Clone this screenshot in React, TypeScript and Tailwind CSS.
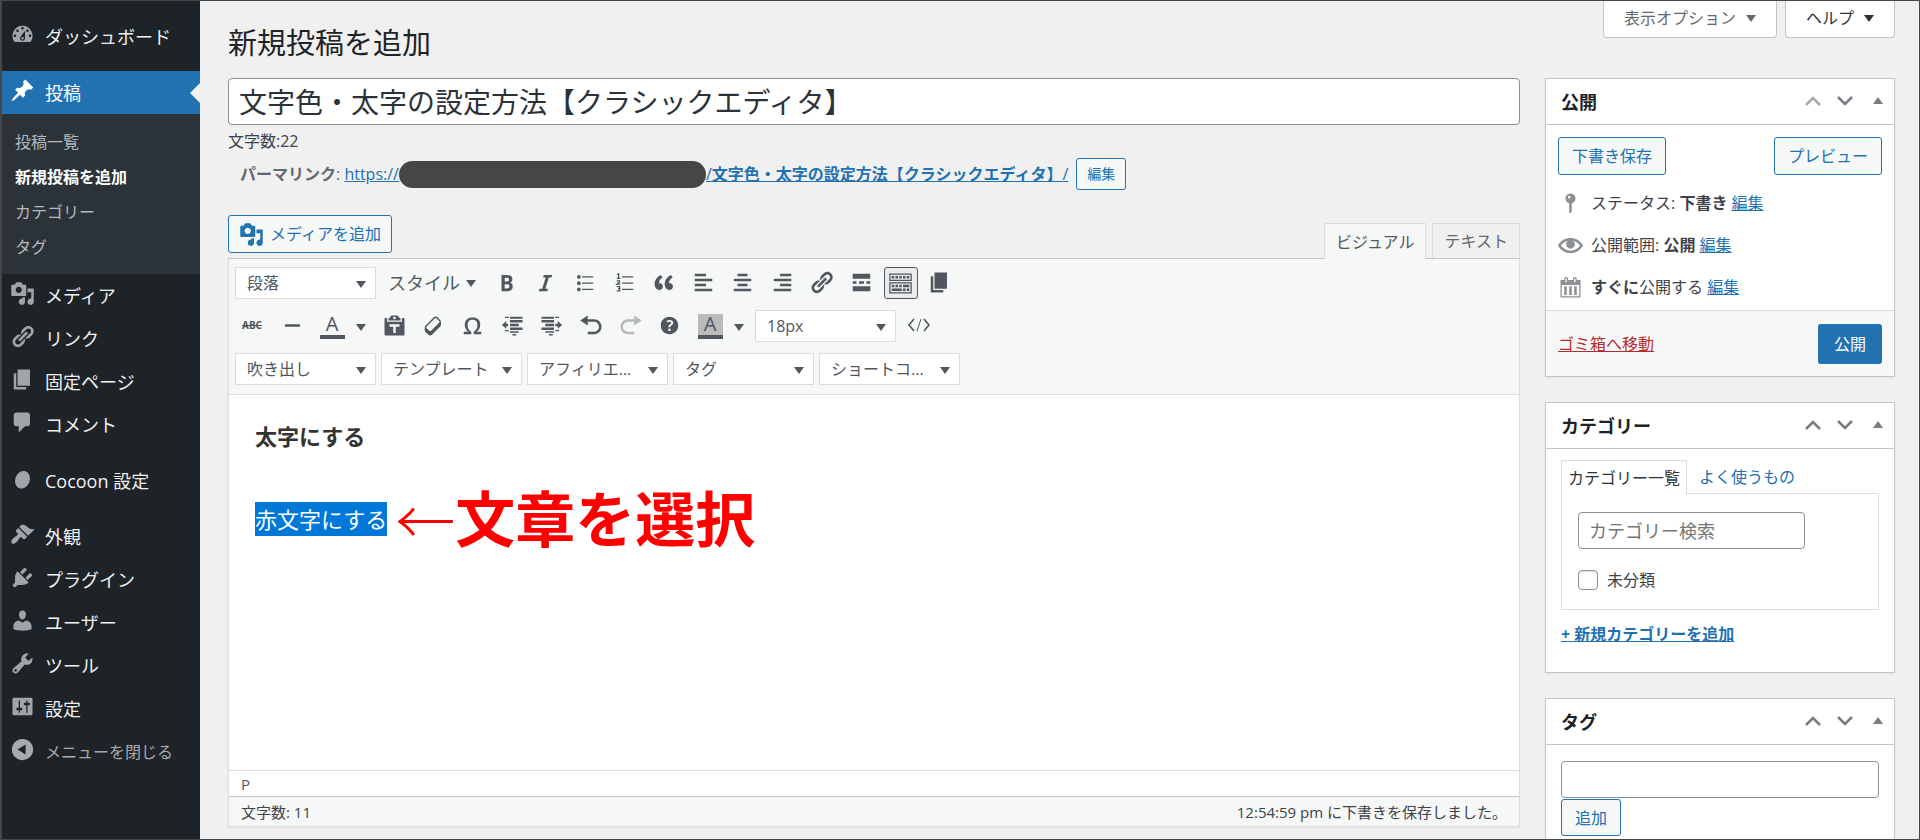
import { useState } from "react";
import type { ReactNode } from "react";

// 20x20 admin icon set
const ICONS = {
  post: "M10.44 3.02l1.82-1.82 6.36 6.35-1.83 1.82c-1.05-.68-2.48-.57-3.41.36l-.75.75c-.92.93-1.04 2.35-.35 3.41l-1.83 1.82-2.41-2.41-2.8 2.79c-.42.42-3.38 2.71-3.8 2.29s1.86-3.39 2.28-3.81l2.79-2.79L4.1 9.36l1.83-1.82c1.05.69 2.48.57 3.4-.36l.75-.75c.93-.92 1.05-2.35.36-3.41z",
  media: "M13 11V4c0-.55-.45-1-1-1h-1.67L9 1H5L3.67 3H2c-.55 0-1 .45-1 1v7c0 .55.45 1 1 1h10c.55 0 1-.45 1-1zM7 4.5c1.38 0 2.5 1.12 2.5 2.5S8.38 9.5 7 9.5 4.5 8.38 4.5 7 5.62 4.5 7 4.5zM14 6h5v10.5c0 1.38-1.12 2.5-2.5 2.5S14 17.88 14 16.5s1.12-2.5 2.5-2.5c.17 0 .34.02.5.05V9h-3V6zm-4 8.05V13h2v3.5c0 1.38-1.12 2.5-2.5 2.5S7 17.88 7 16.5 8.12 14 9.5 14c.17 0 .34.02.5.05z",
  link: "M17.74 2.76c1.68 1.69 1.68 4.41 0 6.1l-1.53 1.52c-1.12 1.12-2.7 1.47-4.14 1.09l2.62-2.61.76-.77.76-.76c.84-.84.84-2.2 0-3.04-.84-.85-2.2-.85-3.04 0l-.77.76-3.38 3.38c-.37-1.44-.02-3.02 1.1-4.14l1.52-1.53c1.69-1.68 4.42-1.68 6.1 0zM8.59 13.43l5.34-5.34c.42-.42.42-1.1 0-1.52-.44-.43-1.13-.39-1.53 0l-5.33 5.34c-.42.42-.42 1.1 0 1.52.44.43 1.13.39 1.52 0zm-.76 2.29l4.14-4.15c.38 1.44.03 3.02-1.09 4.14l-1.52 1.53c-1.69 1.68-4.41 1.68-6.1 0-1.68-1.68-1.68-4.42 0-6.1l1.53-1.52c1.12-1.12 2.7-1.47 4.14-1.1l-4.14 4.15c-.85.84-.85 2.2 0 3.05.84.84 2.2.84 3.04 0z",
  page: "M6 15V2h10v13H6zm-1 1h8v2H3V5h2v11z",
  comment: "M5 2h9c1.1 0 2 .9 2 2v7c0 1.1-.9 2-2 2h-2l-5 5v-5H5c-1.1 0-2-.9-2-2V4c0-1.1.9-2 2-2z",
  appearance: "M14.48 11.06L7.41 3.99l1.5-1.5c.5-.56 2.3-.47 3.51.32 1.21.8 1.43 1.28 2.91 2.1 1.18.64 2.45 1.26 4.45.85zm-.71.71L6.7 4.7 4.93 6.47c-.39.39-.39 1.02 0 1.41l1.06 1.06c.39.39.39 1.03 0 1.42-.6.6-1.43 1.11-2.21 1.69-.35.26-.7.53-1.01.84C1.43 14.23.4 16.08 1.4 17.07c.99 1 2.84-.03 4.18-1.36.31-.31.58-.66.85-1.02.57-.78 1.08-1.61 1.69-2.21.39-.39 1.02-.39 1.41 0l1.06 1.06c.39.39 1.02.39 1.41 0z",
  plugin: "M13.11 4.36L9.87 7.6 8 5.73l3.24-3.24c.35-.34 1.05-.2 1.56.32.52.51.66 1.21.31 1.55zm-8 1.77l.91-1.12 9.01 9.01-1.19.84c-.71.71-2.63 1.16-3.82 1.16H6.14L4.9 17.26c-.59.59-1.54.59-2.12 0-.59-.58-.59-1.53 0-2.12l1.24-1.24v-3.88c0-1.13.4-3.19 1.09-3.89zm7.26 3.97l3.24-3.24c.34-.35 1.04-.21 1.55.31.52.51.66 1.21.31 1.55l-3.24 3.25z",
  user: "M10 9.25c-2.27 0-2.73-3.44-2.73-3.44C7 4.02 7.82 2 9.97 2c2.16 0 2.98 2.02 2.71 3.81 0 0-.41 3.44-2.68 3.44zm0 2.57L12.72 10c2.39 0 4.52 2.33 4.52 4.53v2.49s-3.65 1.13-7.24 1.13c-3.65 0-7.24-1.13-7.24-1.13v-2.49c0-2.25 1.94-4.48 4.47-4.48z",
  tool: "M16.68 9.77c-1.34 1.34-3.3 1.67-4.95.99l-5.41 6.52c-.99.99-2.59.99-3.58 0s-.99-2.59 0-3.57l6.52-5.42c-.68-1.65-.35-3.61.99-4.95 1.28-1.28 3.12-1.62 4.72-1.06l-2.89 2.89 2.82 2.82 2.86-2.87c.53 1.58.18 3.39-1.08 4.65zM3.81 16.21c.4.39 1.04.39 1.43 0 .4-.4.4-1.04 0-1.43-.39-.4-1.03-.4-1.43 0-.39.39-.39 1.03 0 1.43z",
  settings: "M18 16V4c0-.55-.45-1-1-1H3c-.55 0-1 .45-1 1v12c0 .55.45 1 1 1h14c.55 0 1-.45 1-1zM8 11h1c.55 0 1 .45 1 1s-.45 1-1 1H8v1.5c0 .28-.22.5-.5.5s-.5-.22-.5-.5V13H6c-.55 0-1-.45-1-1s.45-1 1-1h1V5.5c0-.28.22-.5.5-.5s.5.22.5.5V11zm5-2h-1c-.55 0-1-.45-1-1s.45-1 1-1h1V5.5c0-.28.22-.5.5-.5s.5.22.5.5V7h1c.55 0 1 .45 1 1s-.45 1-1 1h-1v5.5c0 .28-.22.5-.5.5s-.5-.22-.5-.5V9z",
  collapse: "M10 1.5a8.5 8.5 0 1 0 0 17 8.5 8.5 0 0 0 0-17zM12.5 6v8L6 10z",
  dashboard: "M3.76 16h12.48A7.998 7.998 0 0 0 10 3a7.998 7.998 0 0 0-6.24 13zM10 4c.55 0 1 .45 1 1s-.45 1-1 1-1-.45-1-1 .45-1 1-1zM6 6c.55 0 1 .45 1 1s-.45 1-1 1-1-.45-1-1 .45-1 1-1zm8 0c.55 0 1 .45 1 1s-.45 1-1 1-1-.45-1-1 .45-1 1-1zm-5.37 5.55L12 7v6c0 1.1-.9 2-2 2s-2-.9-2-2c0-.57.24-1.08.63-1.45zM4 10c.55 0 1 .45 1 1s-.45 1-1 1-1-.45-1-1 .45-1 1-1zm12 0c.55 0 1 .45 1 1s-.45 1-1 1-1-.45-1-1 .45-1 1-1zm-5 3c0-.55-.45-1-1-1s-1 .45-1 1 .45 1 1 1 1-.45 1-1z",
  bold: "M6 4v13h4.54c1.37 0 2.46-.33 3.26-1 .8-.66 1.2-1.58 1.2-2.77 0-.84-.17-1.51-.51-2.01s-.9-.85-1.67-1.03v-.09c.57-.1 1.02-.4 1.36-.9s.51-1.13.51-1.91c0-1.14-.39-1.98-1.17-2.5C12.75 4.26 11.5 4 9.78 4H6zm2.57 5.15V6.26h1.36c.73 0 1.27.11 1.61.32.34.22.51.58.51 1.07 0 .54-.16.92-.47 1.15s-.82.35-1.51.35h-1.5zm0 2.19h1.6c1.44 0 2.16.53 2.16 1.61 0 .6-.17 1.05-.51 1.34s-.86.43-1.57.43H8.57v-3.38z",
  italic: "M14.78 6h-2.13l-2.8 9h2.12l-.62 2H4.6l.62-2h2.14l2.8-9H8.03l.62-2h6.75z",
  ul: "M5.5 7a1.5 1.5 0 1 1 0-3 1.5 1.5 0 0 1 0 3zM8 5h9v1H8zM5.5 12a1.5 1.5 0 1 1 0-3 1.5 1.5 0 0 1 0 3zM8 10h9v1H8zM5.5 17a1.5 1.5 0 1 1 0-3 1.5 1.5 0 0 1 0 3zM8 15h9v1H8z",
  quote: "M9.49 13.22c0-.74-.2-1.38-.61-1.9-.62-.78-1.83-.88-2.53-.72-.29-1.65 1.11-3.75 2.92-4.65L7.88 4c-2.73 1.3-5.42 4.28-4.96 8.05C3.21 14.43 4.59 16 6.54 16c.85 0 1.56-.25 2.12-.75s.83-1.18.83-2.03zm8.05 0c0-.74-.2-1.38-.61-1.9-.63-.78-1.83-.88-2.53-.72-.29-1.65 1.11-3.75 2.92-4.65L15.93 4c-2.73 1.3-5.41 4.28-4.95 8.05.29 2.38 1.66 3.95 3.61 3.95.85 0 1.56-.25 2.12-.75s.83-1.18.83-2.03z",
  alignLeft: "M12 5V3H3v2h9zm5 4V7H3v2h14zm-5 4v-2H3v2h9zm5 4v-2H3v2h14z",
  alignCenter: "M14 5V3H6v2h8zm3 4V7H3v2h14zm-3 4v-2H6v2h8zm3 4v-2H3v2h14z",
  alignRight: "M17 5V3H8v2h9zm0 4V7H3v2h14zm0 4v-2H8v2h9zm0 4v-2H3v2h14z",
  more: "M17 7V3H3v4h14zM6 11V9H3v2h3zm6 0V9H8v2h4zm5 0V9h-3v2h3zm0 6v-4H3v4h14z",
  kitchenSink: "M19 2v6H1V2h18zm-1 5V3H2v4h16zM5 4v2H3V4h2zm3 0v2H6V4h2zm3 0v2H9V4h2zm3 0v2h-2V4h2zm3 0v2h-2V4h2zm2 5v9H1V9h18zm-1 8v-7H2v7h16zM5 11v2H3v-2h2zm3 0v2H6v-2h2zm3 0v2H9v-2h2zm6 0v2h-5v-2h5zm-6 3v2H3v-2h8zm3 0v2h-2v-2h2zm3 0v2h-2v-2h2z",
  hr: "M4 9h12v2H4z",
  paste: "M12.38 2L15 5v1H5V5l2.64-3h4.74zM10 5c.55 0 1-.44 1-1 0-.55-.45-1-1-1s-1 .45-1 1c0 .56.45 1 1 1zm5.45-1H17c.55 0 1 .45 1 1v12c0 .56-.45 1-1 1H3c-.55 0-1-.44-1-1V5c0-.55.45-1 1-1h1.55L4 4.63V7h12V4.63zM14 11V9H6v2h3v5h2v-5h3z",
  eraser: "M14.29 4.59l1.1 1.11c.41.4.61.94.61 1.47v2.12c0 .53-.2 1.07-.61 1.47l-6.63 6.63c-.4.41-.94.61-1.47.61s-1.07-.2-1.47-.61l-1.11-1.1-1.1-1.11c-.41-.4-.61-.94-.61-1.47v-2.12c0-.54.2-1.07.61-1.48l6.63-6.62c.4-.41.94-.61 1.47-.61s1.06.2 1.47.61zm-6.21 9.7l6.42-6.42c.39-.39.39-1.03 0-1.43L12.36 4.3c-.19-.19-.45-.29-.72-.29s-.52.1-.71.29l-6.42 6.42c-.39.4-.39 1.04 0 1.43l2.14 2.14c.38.38 1.04.38 1.43 0z",
  omega: "M10 5.4c1.27 0 2.24.36 2.91 1.08.66.71 1 1.76 1 3.13 0 1.28-.23 2.37-.69 3.27-.47.89-1.27 1.52-2.22 2.12v2h6v-2h-3.69c.92-.64 1.62-1.34 2.12-2.34.49-1.01.74-2.13.74-3.35 0-1.78-.55-3.19-1.65-4.22S11.92 3.54 10 3.54s-3.43.53-4.52 1.57c-1.1 1.04-1.65 2.44-1.65 4.2 0 1.21.24 2.31.73 3.33.48 1.01 1.19 1.71 2.1 2.36H3v2h6v-2c-.98-.64-1.8-1.28-2.24-2.17-.45-.89-.67-1.96-.67-3.22 0-1.37.33-2.41 1-3.13C7.75 5.76 8.72 5.4 10 5.4z",
  outdent: "M4 3h3v1H4zM8 3h10v1.6H8zM8 5.6h10v2H8zM8 8.6h7v2H8zM8 11.6h10v2H8zM4 13.6h3v1H4zM8 14.6h7v1.2H8zM10 16.8h3V18h-3zM6.5 8.6v2H5v2L1.5 9.6 5 6.4v2.2z",
  indent: "M13 3h3v1h-3zM2 3h10v1.6H2zM2 5.6h10v2H2zM5 8.6h7v2H5zM2 11.6h10v2H2zM13 13.6h3v1h-3zM5 14.6h7v1.2H5zM8 16.8h3V18H8zM13 8.6v2h2v2l3.5-3L15 6.4v2.2z",
  undo: "M12 5H7V2L1 6l6 4V7h5c2.2 0 4 1.8 4 4s-1.8 4-4 4H7v2h5c3.3 0 6-2.7 6-6s-2.7-6-6-6z",
  redo: "M8 5h5V2l6 4-6 4V7H8c-2.2 0-4 1.8-4 4s1.8 4 4 4h5v2H8c-3.3 0-6-2.7-6-6s2.7-6 6-6z",
  help: "M17 10c0-3.87-3.14-7-7-7-3.87 0-7 3.13-7 7s3.13 7 7 7c3.86 0 7-3.13 7-7zm-6.3 1.48H9.14v-.43c0-.38.08-.7.24-.98s.46-.57.88-.89c.41-.29.68-.53.81-.71.14-.18.2-.39.2-.62 0-.25-.09-.44-.28-.58-.19-.13-.45-.19-.79-.19-.58 0-1.25.19-2 .57l-.64-1.28c.87-.49 1.8-.74 2.77-.74.81 0 1.45.2 1.92.58.48.39.71.91.71 1.55 0 .43-.09.8-.29 1.11-.19.32-.57.67-1.11 1.06-.38.28-.61.49-.71.63-.1.15-.15.34-.15.57v.35zm-1.47 2.74c-.18-.17-.27-.42-.27-.73 0-.33.08-.58.26-.75s.43-.25.77-.25c.32 0 .57.09.75.26s.27.42.27.74c0 .3-.09.55-.27.72-.18.18-.43.27-.75.27-.33 0-.58-.09-.76-.26z",
  pin: "M14 6c0 1.86-1.28 3.41-3 3.86V16c0 1-2 2-2 2V9.86c-1.72-.45-3-2-3-3.86 0-2.21 1.79-4 4-4s4 1.79 4 4zM8 5c0 .55.45 1 1 1s1-.45 1-1-.45-1-1-1-1 .45-1 1z",
  eye: "M19.7 9.4C17.7 6 14 3.9 10 3.9S2.3 6 .3 9.4L0 10l.3.6c2 3.4 5.7 5.5 9.7 5.5s7.7-2.1 9.7-5.5l.3-.6-.3-.6zM10 14.1c-3.1 0-6-1.6-7.7-4.1C3.6 8 5.7 6.6 8 6.1c-.9.6-1.5 1.7-1.5 2.9 0 1.9 1.6 3.5 3.5 3.5s3.5-1.6 3.5-3.5c0-1.2-.6-2.3-1.5-2.9 2.3.5 4.4 1.9 5.7 3.9-1.7 2.5-4.6 4.1-7.7 4.1z",
  calendar: "M15 4h3v14H2V4h3V3c0-.83.67-1.5 1.5-1.5S8 2.17 8 3v1h4V3c0-.83.67-1.5 1.5-1.5S15 2.17 15 3v1zM6 3v2.5c0 .28.22.5.5.5s.5-.22.5-.5V3c0-.28-.22-.5-.5-.5S6 2.72 6 3zm7 0v2.5c0 .28.22.5.5.5s.5-.22.5-.5V3c0-.28-.22-.5-.5-.5s-.5.22-.5.5zm4 14V8H3v9h14zM7 16V9H5v7h2zm4 0V9H9v7h2zm4 0V9h-2v7h2z",
};

type IconName = keyof typeof ICONS;

function Icon({ name, className = "" }: { name: IconName; className?: string }) {
  return (
    <svg viewBox="0 0 20 20" fill="currentColor" fillRule="evenodd" aria-hidden="true" className={`w-[25px] h-[25px] shrink-0 ${className}`}>
      <path d={ICONS[name]} />
    </svg>
  );
}

function Caret({ className = "" }: { className?: string }) {
  return (
    <svg viewBox="0 0 10 7" fill="currentColor" aria-hidden="true" className={`w-2.5 h-[7px] shrink-0 ${className}`}>
      <path d="M0 0h10L5 7z" />
    </svg>
  );
}

/* ---------- Sidebar ---------- */

const SUBMENU = ["投稿一覧", "新規投稿を追加", "カテゴリー", "タグ"];

const MENU_CONTENT: { icon: IconName; label: string }[] = [
  { icon: "media", label: "メディア" },
  { icon: "link", label: "リンク" },
  { icon: "page", label: "固定ページ" },
  { icon: "comment", label: "コメント" },
];

const MENU_SITE: { icon: IconName; label: string }[] = [
  { icon: "appearance", label: "外観" },
  { icon: "plugin", label: "プラグイン" },
  { icon: "user", label: "ユーザー" },
  { icon: "tool", label: "ツール" },
  { icon: "settings", label: "設定" },
];

function MenuItem({ icon, label, active = false }: { icon: ReactNode; label: string; active?: boolean }) {
  return (
    <li>
      <a
        href="#"
        className={`relative flex h-[43px] items-center gap-2.5 pl-2 text-[18px] leading-6 ${
          active ? "bg-[#2271b1] text-white" : "text-[#f0f0f1]"
        }`}
      >
        <span className={`pb-1 ${active ? "text-white" : "text-[#a0a5aa]"}`}>{icon}</span>
        {label}
        {active && (
          <span className="absolute right-0 top-1/2 -translate-y-1/2 border-y-10 border-r-10 border-y-transparent border-r-[#f0f0f0]" />
        )}
      </a>
    </li>
  );
}

function Sidebar() {
  return (
    <nav className="w-[198px] shrink-0 bg-[#1d2327] pt-3.5">
      <ul>
        <MenuItem icon={<Icon name="dashboard" />} label="ダッシュボード" />
      </ul>
      <ul className="mt-[13px]">
        <MenuItem icon={<Icon name="post" />} label="投稿" active />
        <li>
          <ul className="bg-[#2c3338] py-2.5">
            {SUBMENU.map((s, i) => (
              <li key={s}>
                <a
                  href="#"
                  className={`flex h-[35px] items-center pl-[13px] text-[16px] ${
                    i === 1 ? "font-bold text-white" : "text-[#b4b9be]"
                  }`}
                >
                  {s}
                </a>
              </li>
            ))}
          </ul>
        </li>
        {MENU_CONTENT.map((m) => (
          <MenuItem key={m.label} icon={<Icon name={m.icon} />} label={m.label} />
        ))}
      </ul>
      <ul className="mt-[13px]">
        <MenuItem
          icon={
            <svg viewBox="0 0 20 20" fill="currentColor" className="h-[25px] w-[25px]" aria-hidden="true">
              <ellipse cx="10" cy="11" rx="5.8" ry="7.2" transform="rotate(20 10 11)" />
            </svg>
          }
          label="Cocoon 設定"
        />
      </ul>
      <ul className="mt-[13px]">
        {MENU_SITE.map((m) => (
          <MenuItem key={m.label} icon={<Icon name={m.icon} />} label={m.label} />
        ))}
        <li>
          <button type="button" className="flex h-[43px] items-center gap-2.5 pl-2 text-[16px] text-[#a7aaad]">
            <span className="pb-1">
              <Icon name="collapse" />
            </span>
            メニューを閉じる
          </button>
        </li>
      </ul>
    </nav>
  );
}

/* ---------- Editor ---------- */

function ToolSelect({ label, value }: { label: string; value: string }) {
  return (
    <div className="relative h-8 w-[141px] text-[#50575e]">
      <select aria-label={label} className="h-full w-full appearance-none border border-[#dcdcde] bg-white pl-[11px] text-[16px] leading-6">
        <option>{value}</option>
      </select>
      <Caret className="pointer-events-none absolute right-2.5 top-3.5" />
    </div>
  );
}

function ToolButton({ label, active = false, disabled = false, children }: { label: string; active?: boolean; disabled?: boolean; children: ReactNode }) {
  return (
    <button
      type="button"
      aria-label={label}
      disabled={disabled}
      className={`flex h-8 w-[34px] items-center justify-center ${
        active ? "rounded-[3px] border border-[#50575e] bg-[#ebebec]" : "pb-0.5"
      } ${disabled ? "text-[#b5b9bd]" : ""}`}
    >
      {children}
    </button>
  );
}

function ColorButton({ label, filled = false }: { label: string; filled?: boolean }) {
  return (
    <div className="flex h-8 w-14 items-center justify-between">
      <button type="button" aria-label={label} className="flex h-8 w-[34px] items-center justify-center">
        <span className={`flex h-[25px] w-[25px] items-start justify-center border-b-4 border-[#50575e] text-[20px] leading-5 font-medium ${filled ? "bg-[#bbb]" : ""}`}>
          A
        </span>
      </button>
      <button type="button" aria-label={`${label}を選択`} className="flex h-8 w-5 items-center justify-center pt-0.5">
        <Caret />
      </button>
    </div>
  );
}

const ROW3 = ["吹き出し", "テンプレート", "アフィリエ...", "タグ", "ショートコ..."];

function Toolbar() {
  return (
    <div className="flex flex-col gap-[11px] border-b border-[#dcdcde] bg-[#f6f7f7] px-1.5 pt-2 pb-[9px] text-[#50575e]">
      <div className="flex items-center gap-1.5">
        <ToolSelect label="書式" value="段落" />
        <button type="button" className="flex h-8 w-[101px] items-center gap-1.5 pl-1.5 text-[18px]">
          スタイル <Caret />
        </button>
        <div className="flex w-[468px] justify-between">
          <ToolButton label="太字"><Icon name="bold" /></ToolButton>
          <ToolButton label="イタリック"><Icon name="italic" /></ToolButton>
          <ToolButton label="番号なしリスト"><Icon name="ul" /></ToolButton>
          <ToolButton label="番号付きリスト">
            <svg viewBox="0 0 20 20" className="h-[25px] w-[25px]" fill="none" stroke="currentColor" strokeWidth="1" aria-hidden="true">
              <path d="M8 5.5h9M8 10.5h9M8 15.5h9" />
              <path d="M4 3.8l1.3-.8v3.6M3.8 6.6h2.8M3.8 8.6h2.2v1.2L4 11.3h2.6M3.8 13.3h2.4v1.6H4.8M6.2 14.9v1.7H3.8" />
            </svg>
          </ToolButton>
          <ToolButton label="引用"><Icon name="quote" /></ToolButton>
          <ToolButton label="左寄せ"><Icon name="alignLeft" /></ToolButton>
          <ToolButton label="中央揃え"><Icon name="alignCenter" /></ToolButton>
          <ToolButton label="右寄せ"><Icon name="alignRight" /></ToolButton>
          <ToolButton label="リンクの挿入"><Icon name="link" /></ToolButton>
          <ToolButton label="続きを読む"><Icon name="more" /></ToolButton>
          <ToolButton label="ツールバー切り替え" active><Icon name="kitchenSink" /></ToolButton>
          <ToolButton label="改ページ"><Icon name="page" /></ToolButton>
        </div>
      </div>
      <div className="flex items-center gap-1.5">
        <ToolButton label="打ち消し">
          <span className="text-[10px] leading-6 font-bold line-through">ABC</span>
        </ToolButton>
        <ToolButton label="横ライン"><Icon name="hr" /></ToolButton>
        <ColorButton label="文字色" />
        <div className="flex w-[310px] justify-between">
          <ToolButton label="テキストとしてペースト"><Icon name="paste" /></ToolButton>
          <ToolButton label="書式設定をクリア"><Icon name="eraser" /></ToolButton>
          <ToolButton label="特殊文字"><Icon name="omega" /></ToolButton>
          <ToolButton label="インデントを減らす"><Icon name="outdent" /></ToolButton>
          <ToolButton label="インデントを増やす"><Icon name="indent" /></ToolButton>
          <ToolButton label="取り消し"><Icon name="undo" /></ToolButton>
          <ToolButton label="やり直し" disabled><Icon name="redo" /></ToolButton>
          <ToolButton label="キーボードショートカット"><Icon name="help" /></ToolButton>
        </div>
        <ColorButton label="背景色" filled />
        <ToolSelect label="フォントサイズ" value="18px" />
        <ToolButton label="ソースコード">
          <svg viewBox="0 0 24 16" className="h-4 w-6" fill="none" stroke="currentColor" strokeWidth="1.6" aria-hidden="true">
            <path d="M7 2L2 8l5 6M17 2l5 6-5 6" />
            <path d="M14 2l-4 12" strokeWidth="1" />
          </svg>
        </ToolButton>
      </div>
      <div className="flex items-center gap-[5px]">
        {ROW3.map((v) => (
          <ToolSelect key={v} label={v} value={v} />
        ))}
      </div>
    </div>
  );
}

function Editor() {
  return (
    <section className="flex flex-col">
      <div className="flex items-end justify-between">
        <button type="button" className="mb-[5px] flex h-[38px] items-center gap-1.5 rounded-[3px] border border-[#2271b1] bg-[#f6f7f7] px-2.5 text-[16px] text-[#2271b1]">
          <Icon name="media" />
          メディアを追加
        </button>
        <div className="flex gap-[6px] text-[16px]">
          <button type="button" className="relative -mb-px h-9 border border-b-0 border-[#dcdcde] bg-[#f6f7f7] px-[11px] text-[#50575e]">ビジュアル</button>
          <button type="button" className="h-[35px] border border-b-0 border-[#dcdcde] bg-[#f0f0f0] px-[11px] text-[#646970]">テキスト</button>
        </div>
      </div>
      <div className="border border-[#dcdcde] border-t-[#c3c4c7] shadow-xs">
        <Toolbar />
        <div className="h-[375px] bg-white px-[26px] pt-6 text-[22px] leading-[34px] text-[#333]">
          <p className="font-bold">太字にする</p>
          <div className="mt-9 flex h-[60px] items-center">
            <p className="bg-[#0078d7] text-white">赤文字にする</p>
            <p className="flex items-center pl-2 text-[60px] leading-[60px] font-bold whitespace-nowrap text-[#f00]">
              <span className="font-['Noto_Sans_CJK_JP'] font-light">←</span>文章を選択
            </p>
          </div>
        </div>
        <div className="h-[26px] border-t border-[#dcdcde] bg-white px-3 text-[15px] leading-[26px] text-[#50575e]">P</div>
        <div className="flex h-[30px] items-center justify-between border-t border-[#c3c4c7] bg-[#f6f7f7] px-3 text-[15px] text-[#3c434a]">
          <span>文字数: 11</span>
          <span>12:54:59 pm に下書きを保存しました。</span>
        </div>
      </div>
    </section>
  );
}

/* ---------- Meta boxes ---------- */

function MetaBox({ title, first = false, children }: { title: string; first?: boolean; children: ReactNode }) {
  return (
    <section className="border border-[#c3c4c7] bg-white shadow-xs">
      <header className="flex h-[46px] items-center justify-between border-b border-[#c3c4c7] pr-[11px] pl-[15px]">
        <h2 className="text-[18px] font-bold text-[#1d2327]">{title}</h2>
        <div className="flex items-center gap-4 pb-0.5 text-[#787c82]">
          <button type="button" aria-label="上に移動" disabled={first} className={first ? "text-[#a7aaad]" : ""}>
            <svg viewBox="0 0 16 10" className="h-2.5 w-4" fill="none" stroke="currentColor" strokeWidth="2.5" aria-hidden="true">
              <path d="M1 9l7-7 7 7" />
            </svg>
          </button>
          <button type="button" aria-label="下に移動">
            <svg viewBox="0 0 16 10" className="h-2.5 w-4" fill="none" stroke="currentColor" strokeWidth="2.5" aria-hidden="true">
              <path d="M1 1l7 7 7-7" />
            </svg>
          </button>
          <button type="button" aria-label="パネルを閉じる" className="pl-1">
            <Caret className="rotate-180" />
          </button>
        </div>
      </header>
      {children}
    </section>
  );
}

function PublishBox() {
  return (
    <MetaBox title="公開" first>
      <div className="px-3 pt-3">
        <div className="flex justify-between">
          <button type="button" className="h-[38px] rounded-[3px] border border-[#2271b1] bg-[#f6f7f7] px-[13px] text-[#2271b1]">下書き保存</button>
          <button type="button" className="h-[38px] rounded-[3px] border border-[#2271b1] bg-[#f6f7f7] px-[13px] text-[#2271b1]">プレビュー</button>
        </div>
        <ul className="pt-[7px] pb-0.5 text-[#3c434a]">
          <li className="flex h-[42px] items-center gap-2">
            <Icon name="pin" className="text-[#8c8f94]" />
            <span>ステータス: <b>下書き</b> <a href="#" className="text-[#2271b1] underline">編集</a></span>
          </li>
          <li className="flex h-[42px] items-center gap-2">
            <Icon name="eye" className="text-[#8c8f94]" />
            <span>公開範囲: <b>公開</b> <a href="#" className="text-[#2271b1] underline">編集</a></span>
          </li>
          <li className="flex h-[42px] items-center gap-2">
            <Icon name="calendar" className="text-[#8c8f94]" />
            <span><b>すぐに</b>公開する <a href="#" className="text-[#2271b1] underline">編集</a></span>
          </li>
        </ul>
      </div>
      <div className="flex h-[66px] items-center justify-between border-t border-[#dcdcde] bg-[#f6f7f7] px-3">
        <a href="#" className="text-[#b32d2e] underline">ゴミ箱へ移動</a>
        <button type="button" className="h-10 rounded-[3px] bg-[#2271b1] px-4 text-white">公開</button>
      </div>
    </MetaBox>
  );
}

function CategoryBox() {
  return (
    <MetaBox title="カテゴリー">
      <div className="px-[15px] pt-[11px] pb-[26px]">
        <div className="flex">
          <button type="button" className="relative -mb-px h-[34px] border border-b-0 border-[#dcdcde] bg-white px-1.5 text-[#2c3338]">カテゴリー一覧</button>
          <button type="button" className="h-[33px] px-3 text-[#2271b1]">よく使うもの</button>
        </div>
        <div className="border border-[#dcdcde] px-4 pt-[18px] pb-[19px]">
          <input type="text" aria-label="カテゴリー検索" placeholder="カテゴリー検索" className="h-[37px] w-[227px] rounded-[4px] border border-[#8c8f94] px-2.5 text-[18px] placeholder:text-[#757575]" />
          <label className="mt-[21px] flex h-5 items-center gap-[9px] text-[#3c434a]">
            <input type="checkbox" className="h-5 w-5 appearance-none rounded-[4px] border border-[#8c8f94] bg-white shadow-[inset_0_1px_2px_rgba(0,0,0,0.1)]" />
            未分類
          </label>
        </div>
        <a href="#" className="mt-3 block leading-6 font-bold text-[#2271b1] underline">+ 新規カテゴリーを追加</a>
      </div>
    </MetaBox>
  );
}

function TagBox() {
  return (
    <MetaBox title="タグ">
      <div className="flex flex-col items-start gap-px px-[15px] pt-4 pb-4">
        <input type="text" aria-label="新規タグを追加" className="h-[37px] w-full rounded-[4px] border border-[#8c8f94] px-2.5" />
        <button type="button" className="h-[37px] rounded-[3px] border border-[#2271b1] bg-[#f6f7f7] px-[13px] text-[#2271b1]">追加</button>
      </div>
    </MetaBox>
  );
}

export default function App() {
  const [title, setTitle] = useState("文字色・太字の設定方法【クラシックエディタ】");

  return (
    <div className="flex h-screen overflow-hidden border border-l-2 border-[#464646] bg-[#f0f0f0] font-['Open_Sans','Noto_Sans_CJK_JP',sans-serif] text-[16px] leading-6">
      <Sidebar />
      <main className="min-w-0 flex-1 pr-6 pl-7">
        <div className="flex h-[77px] items-start justify-between">
          <h1 className="pt-6 text-[29px] leading-9 text-[#1d2327]">新規投稿を追加</h1>
          <div className="flex gap-2">
            <button type="button" className="flex h-[37px] items-center gap-2.5 rounded-b-[4px] border border-t-0 border-[#c3c4c7] bg-white px-5 pb-0.5 text-[#646970]">
              表示オプション <Caret />
            </button>
            <button type="button" className="flex h-[37px] items-center gap-2.5 rounded-b-[4px] border border-t-0 border-[#c3c4c7] bg-white px-5 pb-0.5 text-[#2c3338]">
              ヘルプ <Caret />
            </button>
          </div>
        </div>
        <div className="flex items-start gap-[25px]">
          <div className="min-w-0 flex-1">
            <input
              type="text"
              aria-label="タイトル"
              value={title}
              onChange={(e) => setTitle(e.target.value)}
              className="block h-[47px] w-full rounded-[4px] border border-[#8c8f94] bg-white px-2.5 pb-0.5 text-[28px] leading-9 text-[#2c3338]"
            />
            <p className="pt-1 text-[#3c434a]">文字数:{title.length}</p>
            <div className="mt-[5px] mb-[25px] flex h-8 items-center pl-3 text-[#646970]">
              <span><b>パーマリンク</b>:&nbsp;</span>
              <a href="#" className="flex items-center text-[#2271b1]">
                <span className="underline">https://</span>
                <span className="h-[27px] w-[307px] rounded-full bg-[#464646]" />
                <span className="underline">/<b>文字色・太字の設定方法【クラシックエディタ】</b>/</span>
              </a>
              <button type="button" className="ml-2 h-8 rounded-[3px] border border-[#2271b1] bg-[#f6f7f7] px-2.5 text-[14px] text-[#2271b1]">編集</button>
            </div>
            <Editor />
          </div>
          <aside className="flex w-[350px] shrink-0 flex-col gap-[25px]">
            <PublishBox />
            <CategoryBox />
            <TagBox />
          </aside>
        </div>
      </main>
    </div>
  );
}
